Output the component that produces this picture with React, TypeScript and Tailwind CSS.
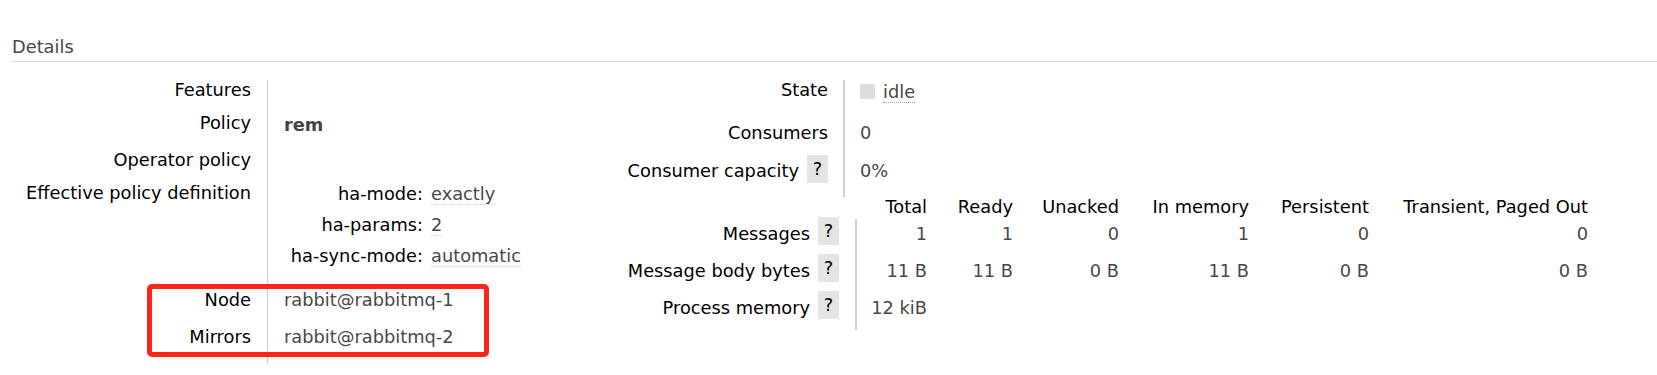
import React from 'react';

const Help = ({ w = 'w-[21px]' }: { w?: string }) => (
  <span className={`${w} inline-flex h-[28px] items-center justify-center bg-[#e4e4e4] text-black`}>?</span>
);

const policyDef = [
  { k: 'ha-mode:', v: 'exactly' },
  { k: 'ha-params:', v: '2' },
  { k: 'ha-sync-mode:', v: 'automatic' },
];

const cols = ['Total', 'Ready', 'Unacked', 'In memory', 'Persistent', 'Transient, Paged Out'];

const msgRows = [
  { label: 'Messages', vals: ['1', '1', '0', '1', '0', '0'] },
  { label: 'Message body bytes', vals: ['11 B', '11 B', '0 B', '11 B', '0 B', '0 B'] },
  { label: 'Process memory', vals: ['12 kiB', '', '', '', '', ''] },
];

const grid = 'grid grid-cols-[244px_86px_86px_106px_130px_120px_219px]';

export default function App() {
  return (
    <div className="min-h-screen bg-white font-['DejaVu_Sans',Verdana,sans-serif] text-[17.8px] leading-[20px] text-black">
      <div className="pl-[11px]">
        <h2 className="border-b border-[#dddddd] pt-[37px] pb-[4px] pl-px font-normal text-[#484848]">Details</h2>

        <div className="flex pt-[18px]">
          {/* left facts */}
          <div className="relative w-[602px] shrink-0">
            <div className="grid grid-cols-[257px_auto]">
              <div className="h-[33px] border-r border-[#cccccc] pr-[16px] text-right">Features</div>
              <div />
              <div className="h-[37px] border-r border-[#cccccc] pr-[16px] text-right">Policy</div>
              <div className="pl-[16px] pt-[2px] font-bold text-[#444444]">rem</div>
              <div className="h-[33px] border-r border-[#cccccc] pr-[16px] text-right">Operator policy</div>
              <div />
              <div className="h-[107px] border-r border-[#cccccc] pr-[16px] text-right">Effective policy definition</div>
              <div className="pl-[16px] pt-px">
                <div className="grid grid-cols-[139px_auto] gap-x-[8px]">
                  {policyDef.map((p) => (
                    <React.Fragment key={p.k}>
                      <div className="h-[31px] text-right">{p.k}</div>
                      <div>
                        <span className="border-b border-dotted border-[#cccccc] text-[#484848]">{p.v}</span>
                      </div>
                    </React.Fragment>
                  ))}
                </div>
              </div>
              <div className="h-[37px] border-r border-[#cccccc] pr-[16px] text-right">Node</div>
              <div className="pl-[16px] text-[#484848]">rabbit@rabbitmq-1</div>
              <div className="h-[37px] border-r border-[#cccccc] pr-[16px] text-right">Mirrors</div>
              <div className="pl-[16px] text-[#484848]">rabbit@rabbitmq-2</div>
            </div>
            <div className="absolute left-[136px] top-[204px] h-[73px] w-[342px] rounded-[5px] border-[5px] border-[#ff2418]" />
          </div>

          {/* right side */}
          <div className="flex flex-col">
            <div className="grid grid-cols-[232px_auto]">
              <div className="h-[38px] border-r-2 border-[#d0d0d0] pr-[15px] text-right">State</div>
              <div className="flex items-start pl-[15px]">
                <span className="mt-[4px] h-[15px] w-[15px] bg-[#dddddd]" />
                <span className="ml-[8px] mt-px border-b border-dotted border-[#999999] leading-[21px] text-[#484848]">idle</span>
              </div>
              <div className="h-[38px] border-r-2 border-[#d0d0d0] pr-[15px] pt-[5px] text-right">Consumers</div>
              <div className="pl-[15px] pt-[5px] text-[#484848]">0</div>
              <div className="flex h-[41px] items-start justify-end gap-[8px] border-r-2 border-[#d0d0d0] pr-[15px]">
                <span className="mt-[5px]">Consumer capacity</span>
                <span className="-mt-px">
                  <Help />
                </span>
              </div>
              <div className="pl-[15px] pt-[5px] text-[#484848]">0%</div>
            </div>

            <div className={`${grid} h-[22px]`}>
              <div />
              {cols.map((c) => (
                <div key={c} className="pr-[16px] text-right">{c}</div>
              ))}
            </div>
            {msgRows.map((r) => (
              <div key={r.label} className={`${grid} h-[37px]`}>
                <div className="flex items-start justify-end gap-[8px] border-r-2 border-[#d0d0d0] pr-[16px]">
                  <span className="mt-[5px]">{r.label}</span>
                  <span className="-mt-[2px]">
                    <Help />
                  </span>
                </div>
                {r.vals.map((v, i) => (
                  <div key={i} className="pr-[16px] pt-[5px] text-right text-[#484848]">{v}</div>
                ))}
              </div>
            ))}
          </div>
        </div>
      </div>
    </div>
  );
}
